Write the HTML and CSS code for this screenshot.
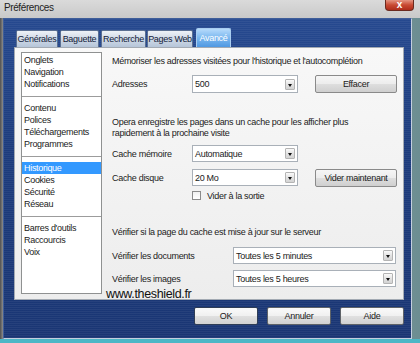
FILE: index.html
```html
<!DOCTYPE html>
<html lang="fr">
<head>
    <meta charset="UTF-8">
    <title>Préférences</title>
    <link rel="stylesheet" href="styles.css">
</head>
<body>

<div class="window">
    <div class="titlebar">
        <span class="title">Préférences</span>
        <span class="close">x</span>
    </div>

    <div class="frame">
        <div class="tabs">
            <div class="tab tab-general">Générales</div>
            <div class="tab tab-wand">Baguette</div>
            <div class="tab tab-search">Recherche</div>
            <div class="tab tab-web">Pages Web</div>
            <div class="tab tab-advanced active">Avancé</div>
        </div>

        <div class="panel">
            <ul class="sections">
                <li>Onglets</li>
                <li>Navigation</li>
                <li>Notifications</li>
                <li class="sep"></li>
                <li>Contenu</li>
                <li>Polices</li>
                <li>Téléchargements</li>
                <li>Programmes</li>
                <li class="sep"></li>
                <li class="selected">Historique</li>
                <li>Cookies</li>
                <li>Sécurité</li>
                <li>Réseau</li>
                <li class="sep"></li>
                <li>Barres d'outils</li>
                <li>Raccourcis</li>
                <li>Voix</li>
            </ul>

            <div class="content">
                <p class="note">Mémoriser les adresses visitées pour l'historique et l'autocomplétion</p>

                <div class="row row-first">
                    <span class="label">Adresses</span>
                    <div class="select"><span>500</span><span class="arrow"></span></div>
                    <div class="button">Effacer</div>
                </div>

                <p class="para">Opera enregistre les pages dans un cache pour les afficher plus<br>rapidement à la prochaine visite</p>

                <div class="row row-cache">
                    <span class="label">Cache mémoire</span>
                    <div class="select"><span>Automatique</span><span class="arrow"></span></div>
                </div>

                <div class="row row-disk">
                    <span class="label">Cache disque</span>
                    <div class="select"><span>20 Mo</span><span class="arrow"></span></div>
                    <div class="button">Vider maintenant</div>
                </div>

                <div class="check-row">
                    <span class="checkbox"></span>
                    <span>Vider à la sortie</span>
                </div>

                <p class="note note-second">Vérifier si la page du cache est mise à jour sur le serveur</p>

                <div class="row row-wide row-docs">
                    <span class="label">Vérifier les documents</span>
                    <div class="select"><span>Toutes les 5 minutes</span><span class="arrow"></span></div>
                </div>

                <div class="row row-wide row-images">
                    <span class="label">Vérifier les images</span>
                    <div class="select"><span>Toutes les 5 heures</span><span class="arrow"></span></div>
                </div>
            </div>
        </div>

        <div class="actions">
            <div class="button default">OK</div>
            <div class="button">Annuler</div>
            <div class="button">Aide</div>
        </div>
    </div>

    <div class="watermark">www.theshield.fr</div>
</div>

</body>
</html>
```

FILE: styles.css
```css
* {
    box-sizing: border-box;
}

html, body {
    margin: 0;
    padding: 0;
}

body {
    width: 420px;
    height: 343px;
    overflow: hidden;
    font-family: "Liberation Sans", Arial, sans-serif;
    font-size: 9px;
    letter-spacing: -0.3px;
    color: #1b1b1b;
}

p {
    margin: 0;
    white-space: nowrap;
}

.window {
    position: relative;
    width: 420px;
    height: 343px;
    display: flex;
    flex-direction: column;
    background: linear-gradient(to right, #4f4f4f 0, #8c8c8c 3px, #9a9e9f 60%, #6c8e92 100%);
    border-bottom: 4px solid #4db7c6;
}

/* title bar */
.titlebar {
    height: 18px;
    flex-shrink: 0;
    display: flex;
    justify-content: space-between;
    align-items: flex-start;
    padding-left: 4px;
    background: linear-gradient(#dadada, #c9c9c9);
}

.title {
    font-size: 10px;
    line-height: 15px;
    letter-spacing: -0.4px;
    color: #1e1e1e;
}

.close {
    width: 29px;
    height: 11px;
    margin-right: 6px;
    border: 1px solid #6b2a1f;
    border-top: 0;
    border-radius: 0 0 4px 4px;
    background: linear-gradient(#e49582, #c84a33 50%, #ae2d1b);
    color: #fff;
    font-weight: bold;
    font-size: 10px;
    line-height: 9px;
    letter-spacing: 0;
    text-align: center;
}

/* blue frame */
.frame {
    flex: 1;
    display: flex;
    flex-direction: column;
    margin: 0 8px 0 3px;
    padding: 9px 7px 0 10px;
    border: 1px solid #3f5e99;
    border-right-color: #c4cfdf;
    border-bottom-color: #c4cfdf;
    background:
        repeating-linear-gradient(rgba(255, 255, 255, 0.05) 0 1px, transparent 1px 2px),
        linear-gradient(#26498f, #1d3c7d 40%, #1a3674);
}

.tabs {
    display: flex;
    align-items: flex-end;
    height: 19px;
    margin-left: 2px;
}

.tab {
    flex: none;
    height: 17px;
    margin-right: 2px;
    line-height: 16px;
    text-align: center;
    white-space: nowrap;
    color: #14223a;
    border: 1px solid #5a6f92;
    border-bottom: 0;
    border-radius: 2px 2px 0 0;
    background: linear-gradient(#eef2f7, #cfd9e6 50%, #b6c5d9);
}

.tab-general { width: 42px; }
.tab-wand { width: 39px; }
.tab-search { width: 45px; margin-right: 1px; }
.tab-web { width: 46px; margin-right: 3px; }
.tab-advanced { width: 35px; }

.tab.active {
    height: 19px;
    line-height: 18px;
    color: #fff;
    border-color: #a9cdf0;
    background: linear-gradient(#b5dafb, #7ab7ef 50%, #4f98e2);
}

/* main panel */
.panel {
    display: flex;
    height: 253px;
    padding: 4px 6px 5px 6px;
    border: 1px solid #a3aab3;
    background: linear-gradient(#f8f8f8, #ededed);
}

.sections {
    width: 81px;
    margin: 0;
    padding: 1px 0;
    list-style: none;
    background: #fff;
    border: 1px solid #8f9191;
}

.sections li {
    padding-left: 2px;
    line-height: 12px;
    white-space: nowrap;
}

.sections li.sep {
    height: 1px;
    margin: 6px 0 5px;
    padding: 0;
    background: #9c9c9c;
}

.sections li.selected {
    background: #3399ff;
    color: #fff;
}

.content {
    flex: 1;
    margin-left: 10px;
}

.note {
    margin-top: 3px;
    line-height: 12px;
}

.note-second {
    margin-top: 25px;
}

.para {
    margin-top: 24px;
    line-height: 11px;
}

.row {
    display: flex;
    align-items: center;
    height: 17px;
}

.row-first {
    height: 18px;
    margin-top: 8px;
}

.row-cache {
    margin-top: 6px;
}

.row-disk {
    margin-top: 7px;
}

.row-docs {
    margin-top: 9px;
}

.row-images {
    margin-top: 6px;
}

.label {
    width: 80px;
    flex-shrink: 0;
}

.row-wide .label {
    width: 121px;
}

.select {
    width: 106px;
    height: 100%;
    display: flex;
    align-items: center;
    justify-content: space-between;
    padding: 0 2px 0 2px;
    background: #fff;
    border: 1px solid #a9b0b8;
}

.row-wide .select {
    width: 163px;
}

.arrow {
    position: relative;
    width: 10px;
    height: 11px;
    border: 1px solid #b4b4b4;
    border-radius: 1px;
    background: linear-gradient(#fafafa, #e3e3e3 50%, #d3d3d3);
}

.arrow::after {
    content: "";
    position: absolute;
    left: 2px;
    top: 4px;
    border-left: 2.5px solid transparent;
    border-right: 2.5px solid transparent;
    border-top: 3px solid #111;
}

.button {
    height: 18px;
    line-height: 16px;
    text-align: center;
    color: #1a1a1a;
    border: 1px solid #8a8a8a;
    border-radius: 2px;
    background: linear-gradient(#f6f6f6 0, #ececec 50%, #dedede 51%, #cfcfcf 100%);
}

.row .button {
    width: 82px;
    margin-left: 17px;
}

.check-row {
    display: flex;
    align-items: center;
    height: 11px;
    margin-top: 4px;
    padding-left: 80px;
}

.checkbox {
    width: 9px;
    height: 9px;
    margin-right: 6px;
    border: 1px solid #8b8b8b;
    background: linear-gradient(#f0f0f0, #ffffff);
}

/* bottom buttons */
.actions {
    display: flex;
    justify-content: flex-end;
    gap: 9px;
    margin-top: 7px;
}

.actions .button {
    width: 64px;
    border-color: #5f6368;
    background: linear-gradient(#fafafa 0, #f0f0f0 50%, #e0e0e0 51%, #d2d2d2 100%);
}

.actions .button.default {
    border-color: #2f3d55;
}

.watermark {
    position: absolute;
    left: 106px;
    top: 288px;
    font-size: 12.5px;
    line-height: 13px;
    letter-spacing: -0.35px;
    color: #111;
}
```
